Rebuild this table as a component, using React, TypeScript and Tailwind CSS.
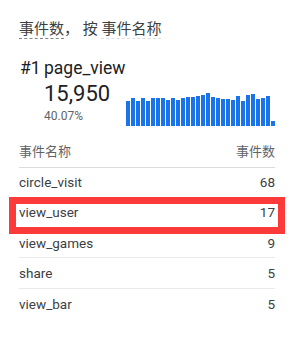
import React from "react";

const bars = [
  25, 28, 25, 28, 25, 28, 28, 28, 26, 28, 26, 28, 29, 29, 30, 31, 33, 29, 28,
  27, 27, 26, 30, 25, 31, 32, 27, 28, 30, 5,
];

const rows = [
  { name: "circle_visit", count: 68 },
  { name: "view_user", count: 17 },
  { name: "view_games", count: 9 },
  { name: "share", count: 5 },
  { name: "view_bar", count: 5 },
];

const font = { fontFamily: 'Roboto, "Noto Sans CJK SC", sans-serif' };

const App = () => {
  return (
    <div
      className="relative h-[338px] w-[295px] overflow-hidden bg-white pl-[19px] pr-[20px] text-[#3c4043]"
      style={font}
    >
      {/* Card title */}
      <div className="pt-[19px] text-[15px] leading-[20px]">
        <span className="border-b border-dashed border-[#80868b]">事件数</span>
        <span>， 按 </span>
        <span className="border-b border-dashed border-[#dadce0]">事件名称</span>
      </div>

      {/* Top event */}
      <div className="mt-[17px] flex text-[17.5px] leading-[24px] text-[#202124]">
        <span className="w-[25px] pl-px">#1</span>
        <span>page_view</span>
      </div>
      <div className="flex justify-between pl-[25px]">
        <div>
          <div className="text-[22px] leading-[28px] text-[#202124]">15,950</div>
          <div className="text-[12px] leading-[16px] text-[#5f6368]">40.07%</div>
        </div>
        <div className="mt-[12.5px] flex h-[33px] items-end gap-px">
          {bars.map((h, i) => (
            <div key={i} className="w-[4px] bg-[#1a73e8]" style={{ height: h }} />
          ))}
        </div>
      </div>

      {/* Table */}
      <div className="mt-[16px] flex justify-between border-b border-[#dadce0] pb-[5px] text-[13px] leading-[20px] text-[#5f6368]">
        <span>事件名称</span>
        <span>事件数</span>
      </div>
      {rows.map((r, i) => (
        <div
          key={r.name}
          className={`flex h-[30.25px] items-center justify-between text-[13.5px] ${
            i < rows.length - 1 ? "border-b border-[#e8eaed]" : ""
          }`}
        >
          <span>{r.name}</span>
          <span>{r.count}</span>
        </div>
      ))}

      {/* Highlight annotation */}
      <div className="absolute left-[9px] top-[197px] h-[37px] w-[276px] border-[7px] border-[#fd3a3a]" />
    </div>
  );
};

export default App;
